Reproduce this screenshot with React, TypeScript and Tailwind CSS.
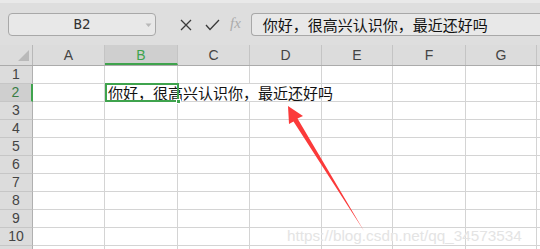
import React from "react";

const COLS = ["A", "B", "C", "D", "E", "F", "G"];
const WIDTHS = [72, 73, 72, 72, 71, 73, 71];
const ROWS = [1, 2, 3, 4, 5, 6, 7, 8, 9, 10, 11];
const TEXT = "你好，很高兴认识你，最近还好吗";

export default function App() {
  return (
    <div className="relative w-[540px] h-[249px] overflow-hidden bg-white font-['Liberation_Sans','Noto_Sans_CJK_SC',sans-serif]">
      {/* toolbar */}
      <div className="h-[45px] bg-[#dedede] border-t-[3px] border-[#e9e9e9] flex items-start pt-[10px]">
        <div className="ml-[8px] w-[148px] h-[23px] rounded-[4px] border border-[#a8a8a8] bg-[#e8e8e8] relative flex items-center justify-center">
          <span className="text-[14px] text-[#333] font-['DejaVu_Sans_Mono','Liberation_Mono',monospace]">B2</span>
          <svg className="absolute right-[3px] top-[9px]" width="7" height="5" viewBox="0 0 7 5">
            <path d="M0.5 0.5 L3.5 4 L6.5 0.5 Z" fill="#b8b8b8" />
          </svg>
        </div>
        <div className="ml-[24px] mt-[5px] flex items-center">
          <svg width="12" height="12" viewBox="0 0 12 12">
            <path d="M1 1 L11 11 M11 1 L1 11" stroke="#3a3a3a" strokeWidth="1.3" fill="none" />
          </svg>
          <svg className="ml-[13px]" width="15" height="12" viewBox="0 0 15 12">
            <path d="M1 6 L5 10.5 L14 1" stroke="#3a3a3a" strokeWidth="1.3" fill="none" />
          </svg>
          <span className="ml-[10px] -mt-[2px] text-[15px] italic text-[#ababab] font-['Liberation_Serif',serif] leading-none">fx</span>
        </div>
        <div className="ml-[10px] flex-1 h-[23px] rounded-l-[4px] border border-r-0 border-[#a8a8a8] bg-[#e8e8e8] flex items-center pl-[11px]">
          <span className="text-[15px] leading-none text-[#111] font-['Noto_Sans_CJK_SC',sans-serif]">{TEXT}</span>
        </div>
      </div>

      {/* column header */}
      <div className="flex h-[21px] bg-[#dcdcdc] border-b border-[#ababab]">
        <div className="w-[33px] shrink-0 border-r border-[#b8b8b8] relative">
          <svg className="absolute left-[18px] top-[5px]" width="11" height="11" viewBox="0 0 11 11">
            <path d="M11 0 L11 11 L0 11 Z" fill="#b9b9b9" />
          </svg>
        </div>
        {COLS.map((c, i) => (
          <div
            key={c}
            style={{ width: WIDTHS[i] }}
            className={
              "shrink-0 flex items-center justify-center text-[14px] border-r border-[#c4c4c4] " +
              (c === "B"
                ? "bg-[#cfcfcf] text-[#3fa34d] border-b-2 border-b-[#3fa34d] pt-[2px]"
                : "text-[#444]")
            }
          >
            {c}
          </div>
        ))}
        <div className="flex-1" />
      </div>

      {/* rows */}
      {ROWS.map((r) => (
        <div key={r} className="flex h-[18px]">
          <div
            className={
              "w-[33px] shrink-0 flex items-center justify-center text-[14px] border-b border-[#c6c6c6] " +
              (r === 2
                ? "bg-[#cfcfcf] text-[#3a7d45] border-r-2 border-r-[#3fa34d]"
                : "bg-[#dcdcdc] text-[#444] border-r border-r-[#b0b0b0]")
            }
          >
            {r < 11 ? r : ""}
          </div>
          {COLS.map((c, i) => {
            const isSel = r === 2 && c === "B";
            const hideRight = r === 2 && (c === "B" || c === "C");
            return (
              <div
                key={c}
                style={{ width: WIDTHS[i] }}
                className={
                  "shrink-0 relative border-b border-[#d4d4d4] " +
                  (hideRight ? "" : "border-r border-r-[#d4d4d4]")
                }
              >
                {isSel && (
                  <>
                    <span className="absolute left-[3px] top-[0px] z-10 whitespace-nowrap text-[15px] leading-[18px] text-[#111] font-['Noto_Sans_CJK_SC',sans-serif]">
                      {TEXT}
                    </span>
                    <div className="absolute left-[0px] top-[-1px] right-[-1px] bottom-[-1px] border-2 border-[#3fa34d] z-20" />
                    <div className="absolute right-[-3px] bottom-[-3px] w-[5px] h-[5px] bg-[#3fa34d] border border-white z-30" />
                  </>
                )}
              </div>
            );
          })}
          <div className="flex-1 border-b border-[#d4d4d4]" />
        </div>
      ))}

      {/* arrow annotation */}
      <svg className="absolute left-0 top-0 pointer-events-none" width="540" height="249" viewBox="0 0 540 249">
        <polygon
          points="288,106 303,116 297.5,118.5 364,231 293.5,121.5 289,124"
          fill="#fb3a3a"
        />
      </svg>

      {/* watermark */}
      <div className="absolute left-[287px] top-[227px] text-[15.3px] leading-[18px] text-[#e4e4e4] font-['Liberation_Sans',sans-serif] whitespace-nowrap [text-shadow:0_0_1px_#ffffff]">
        https://blog.csdn.net/qq_34573534
      </div>
    </div>
  );
}
